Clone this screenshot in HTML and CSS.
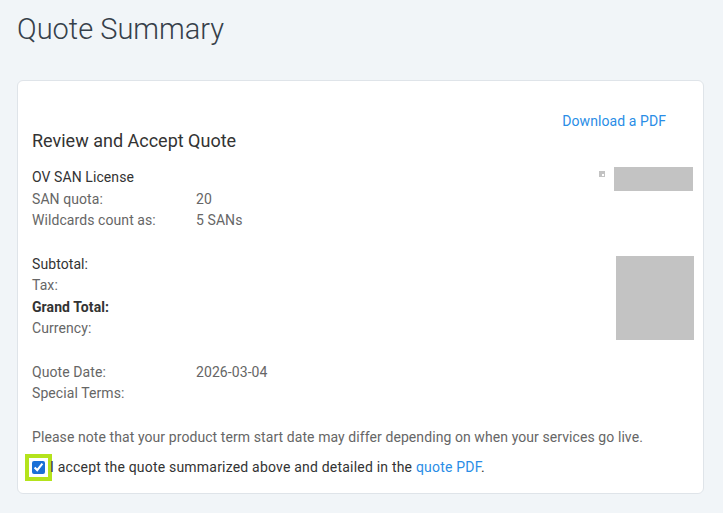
FILE: index.html
```html
<!DOCTYPE html>
<html lang="en">
<head>
<meta charset="utf-8">
<title>Quote Summary</title>
<link rel="stylesheet" href="styles.css">
</head>
<body>
<h1 class="page-title">Quote Summary</h1>
<div class="card">
  <div class="download-row"><a class="link" href="#">Download a PDF</a></div>
  <h2 class="card-title">Review and Accept Quote</h2>

  <div class="sec sec-product">
    <div class="rows">
      <div class="row"><span class="strong">OV SAN License</span></div>
      <div class="row"><span class="lbl">SAN quota:</span><span>20</span></div>
      <div class="row"><span class="lbl">Wildcards count as:</span><span>5 SANs</span></div>
    </div>
    <div class="media media-logo">
      <span class="broken-icon"></span>
      <span class="ph ph-logo"></span>
    </div>
  </div>

  <div class="sec sec-totals">
    <div class="rows">
      <div class="row"><span class="strong">Subtotal:</span></div>
      <div class="row"><span class="lbl">Tax:</span></div>
      <div class="row"><span class="bold">Grand Total:</span></div>
      <div class="row"><span class="lbl">Currency:</span></div>
    </div>
    <div class="media">
      <span class="ph ph-seal"></span>
    </div>
  </div>

  <div class="sec sec-meta">
    <div class="rows">
      <div class="row"><span class="lbl">Quote Date:</span><span>2026-03-04</span></div>
      <div class="row"><span class="lbl">Special Terms:</span></div>
    </div>
  </div>

  <p class="note">Please note that your product term start date may differ depending on when your services go live.</p>

  <label class="accept">
    <input type="checkbox" class="check" checked>
    <span>I accept the quote summarized above and detailed in the <a class="link" href="#">quote PDF</a>.</span>
  </label>
</div>
</body>
</html>
```

FILE: styles.css
```css
html, body {
  margin: 0;
  padding: 0;
  background: #f1f5f8;
}
body {
  font-family: Roboto, "Noto Sans", "Liberation Sans", sans-serif;
  color: #666;
  font-size: 14px;
  padding: 10px 19px 0 17px;
}
.page-title {
  margin: 0;
  font-size: 29px;
  font-weight: 300;
  line-height: 38px;
  color: #36404a;
}
.card {
  margin-top: 32px;
  background: #fff;
  border: 1px solid #dfe4e9;
  border-radius: 6px;
  padding: 29px 10px 14px 14px;
}
.download-row {
  text-align: right;
  padding-right: 27px;
  line-height: 21px;
  height: 21px;
  margin-top: 1px;
  margin-bottom: -1px;
  letter-spacing: 0.08px;
}
.link {
  color: #2a8de6;
  text-decoration: none;
}
.card-title {
  margin: 0 0 16px;
  font-size: 18px;
  font-weight: 400;
  line-height: 20px;
  color: #333;
}
.sec {
  display: flex;
  justify-content: space-between;
  align-items: flex-start;
  margin-bottom: 22px;
}
.rows {
  flex: 1;
  letter-spacing: 0.08px;
}
.row {
  display: grid;
  grid-template-columns: 164px 1fr;
  line-height: 21.5px;
  height: 21.5px;
}
.strong {
  font-weight: 400;
  color: #333;
}
.bold {
  font-weight: 700;
  color: #333;
}
.media {
  display: flex;
  align-items: flex-start;
}
.broken-icon {
  width: 6px;
  height: 6px;
  margin-top: 4px;
  margin-right: 9px;
  background: #c3c3c3;
  position: relative;
}
.broken-icon::after {
  content: "";
  position: absolute;
  right: 1px;
  bottom: 1px;
  width: 2px;
  height: 2px;
  background: #fff;
}
.ph {
  display: block;
  background: #c3c3c3;
}
.ph-logo {
  width: 79px;
  height: 24px;
}
.ph-seal {
  width: 78px;
  height: 84px;
  margin-top: 2px;
  margin-right: -1px;
}
.sec-totals .rows { height: 86px; }
.note {
  margin: 0;
  line-height: 21.5px;
  letter-spacing: 0.08px;
  color: #666;
}
.accept {
  display: flex;
  align-items: center;
  margin-top: 9px;
  line-height: 21.5px;
  color: #333;
  letter-spacing: 0.2px;
}
.check {
  width: 13px;
  height: 13px;
  margin: 0 5px 0 0;
  accent-color: #1a6fd6;
  outline: 4px solid #b4e31c;
  outline-offset: 3px;
}
```
